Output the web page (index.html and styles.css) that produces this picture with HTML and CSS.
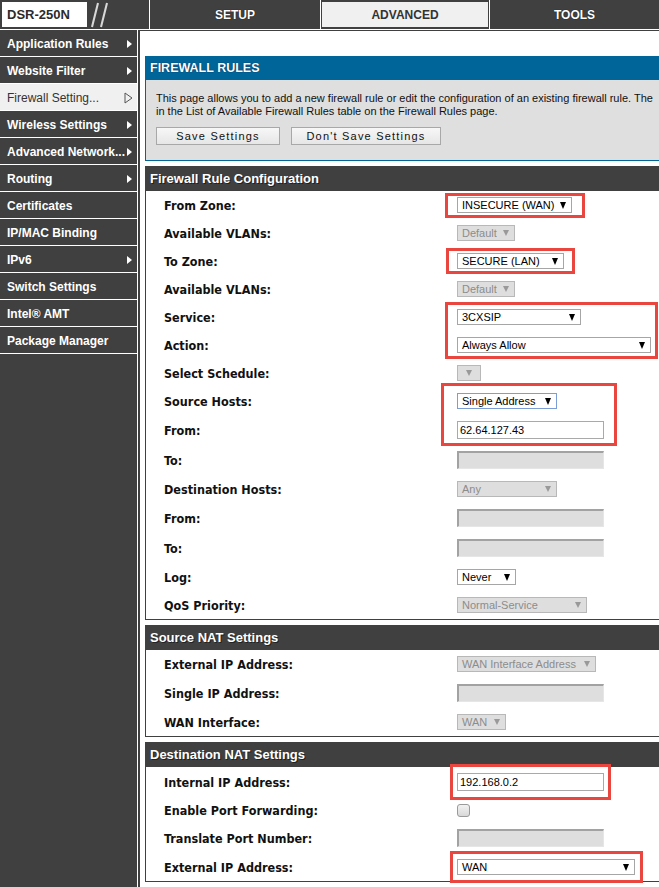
FILE: index.html
```html
<!DOCTYPE html>
<html>
<head>
<meta charset="utf-8">
<title>DSR-250N Firewall Rules</title>
<link rel="stylesheet" href="styles.css">
</head>
<body>
<header class="top">
  <div class="brand">
    <span class="model">DSR-250N</span>
    <svg class="slashes" width="22" height="29" viewBox="0 0 22 29"><line x1="11" y1="3" x2="5" y2="27"/><line x1="20" y1="3" x2="14" y2="27"/></svg>
  </div>
  <div class="tab tab-setup">SETUP</div>
  <div class="tab tab-adv"><span class="tab-box">ADVANCED</span></div>
  <div class="tab tab-tools">TOOLS</div>
</header>
<div class="main">
  <nav class="side">
    <ul class="menu">
      <li><span>Application Rules</span><i class="tri"></i></li>
      <li><span>Website Filter</span><i class="tri"></i></li>
      <li class="cur"><span>Firewall Setting...</span><svg class="tri-o" width="9" height="12" viewBox="0 0 9 12"><polygon points="1,1 8,6 1,11"/></svg></li>
      <li><span>Wireless Settings</span><i class="tri"></i></li>
      <li><span>Advanced Network...</span><i class="tri"></i></li>
      <li><span>Routing</span><i class="tri"></i></li>
      <li><span>Certificates</span></li>
      <li><span>IP/MAC Binding</span></li>
      <li><span>IPv6</span><i class="tri"></i></li>
      <li><span>Switch Settings</span></li>
      <li><span>Intel® AMT</span></li>
      <li><span>Package Manager</span></li>
    </ul>
  </nav>
  <section class="content">
    <div class="panel">
      <div class="blue-head">FIREWALL RULES</div>
      <div class="info">
        <p class="desc">This page allows you to add a new firewall rule or edit the configuration of an existing firewall rule. The<br>in the List of Available Firewall Rules table on the Firewall Rules page.</p>
        <div class="btns">
          <button class="btn btn-save">Save Settings</button>
          <button class="btn btn-nosave">Don't Save Settings</button>
        </div>
      </div>
    </div>

    <div class="panel sec">
      <div class="sec-head">Firewall Rule Configuration</div>
      <div class="sec-body">
        <div class="row"><label>From Zone:</label><span class="sel w115">INSECURE (WAN)<i class="dn"></i></span></div>
        <div class="row"><label>Available VLANs:</label><span class="sel dis w58">Default<i class="dn"></i></span></div>
        <div class="row"><label>To Zone:</label><span class="sel w107">SECURE (LAN)<i class="dn"></i></span></div>
        <div class="row"><label>Available VLANs:</label><span class="sel dis w58">Default<i class="dn"></i></span></div>
        <div class="row"><label>Service:</label><span class="sel w124">3CXSIP<i class="dn"></i></span></div>
        <div class="row"><label>Action:</label><span class="sel w194">Always Allow<i class="dn"></i></span></div>
        <div class="row"><label>Select Schedule:</label><span class="sel dis w24 only-arrow"><i class="dn"></i></span></div>
        <div class="row"><label>Source Hosts:</label><span class="sel focus w100">Single Address<i class="dn"></i></span></div>
        <div class="row tall"><label>From:</label><span class="inp">62.64.127.43</span></div>
        <div class="row tall"><label>To:</label><span class="inp dis"></span></div>
        <div class="row"><label>Destination Hosts:</label><span class="sel dis w100">Any<i class="dn"></i></span></div>
        <div class="row tall"><label>From:</label><span class="inp dis"></span></div>
        <div class="row tall"><label>To:</label><span class="inp dis"></span></div>
        <div class="row"><label>Log:</label><span class="sel w59">Never<i class="dn"></i></span></div>
        <div class="row"><label>QoS Priority:</label><span class="sel dis w130">Normal-Service<i class="dn"></i></span></div>
      </div>
    </div>

    <div class="panel sec">
      <div class="sec-head">Source NAT Settings</div>
      <div class="sec-body">
        <div class="row"><label>External IP Address:</label><span class="sel dis w139">WAN Interface Address<i class="dn"></i></span></div>
        <div class="row tall"><label>Single IP Address:</label><span class="inp dis"></span></div>
        <div class="row"><label>WAN Interface:</label><span class="sel dis w49">WAN<i class="dn"></i></span></div>
      </div>
    </div>

    <div class="panel sec">
      <div class="sec-head">Destination NAT Settings</div>
      <div class="sec-body">
        <div class="row tall"><label>Internal IP Address:</label><span class="inp">192.168.0.2</span></div>
        <div class="row short"><label>Enable Port Forwarding:</label><span class="chk"></span></div>
        <div class="row tall"><label>Translate Port Number:</label><span class="inp dis"></span></div>
        <div class="row"><label>External IP Address:</label><span class="sel w178">WAN<i class="dn"></i></span></div>
      </div>
    </div>

    <div class="mark mark-from"></div>
    <div class="mark mark-to"></div>
    <div class="mark mark-service"></div>
    <div class="mark mark-source"></div>
    <div class="mark mark-internal"></div>
    <div class="mark mark-external"></div>
  </section>
</div>
</body>
</html>
```
FILE: styles.css
```css
* { box-sizing: border-box; }
html, body { margin: 0; padding: 0; }
body {
  width: 659px;
  height: 887px;
  overflow: hidden;
  background: #fff;
  font-family: "Liberation Sans", Arial, sans-serif;
  color: #000;
}

/* ---------- top bar ---------- */
.top {
  display: flex;
  height: 30px;
  background: #404040;
  border-bottom: 1px solid #fff;
}
.brand {
  width: 149px;
  display: flex;
  align-items: stretch;
  padding: 2px 0 2px 2px;
}
.model {
  width: 85px;
  background: #fff;
  color: #2b2b2b;
  font-weight: bold;
  font-size: 13px;
  line-height: 25px;
  padding-left: 5px;
}
.slashes { display: block; margin-top: -2px; }
.slashes line { stroke: #d8d8d8; stroke-width: 2; }
.tab {
  border-left: 1px solid #fff;
  display: flex;
  align-items: center;
  justify-content: center;
  color: #fff;
  font-weight: bold;
  font-size: 12px;
  text-shadow: 0 0 1px #000;
}
.tab-setup { width: 171px; }
.tab-adv { width: 169px; padding: 2px 1px; align-items: stretch; }
.tab-tools { flex: 1; }
.tab-box {
  flex: 1;
  background: #f0f0f0;
  color: #333;
  text-shadow: none;
  display: flex;
  align-items: center;
  justify-content: center;
}

/* ---------- layout ---------- */
.main { display: flex; height: 857px; }
.side { width: 140px; background: #404040; flex: none; }
.menu {
  list-style: none;
  margin: 0;
  padding: 0;
  width: 138px;
  height: 100%;
  border-right: 1px solid #fff;
}
.menu li {
  height: 27px;
  border-bottom: 1px solid #fff;
  display: flex;
  align-items: center;
  justify-content: space-between;
  padding: 1px 5px 0 7px;
  color: #fff;
  font-weight: bold;
  font-size: 12px;
}
.menu li.cur {
  background: #f0f0f0;
  color: #333;
  font-weight: normal;
  padding-right: 4px;
}
.tri {
  width: 0;
  height: 0;
  border-left: 5px solid #fff;
  border-top: 4.5px solid transparent;
  border-bottom: 4.5px solid transparent;
}
.tri-o polygon { fill: none; stroke: #555; stroke-width: 1; }

.content {
  flex: 1;
  position: relative;
  overflow: hidden;
  border-top: 1px solid #404040;
  padding: 25px 0 0 5px;
}
.panel { width: 560px; }

/* ---------- firewall rules box ---------- */
.blue-head {
  height: 24px;
  line-height: 25px;
  background: #006699;
  color: #fff;
  font-weight: bold;
  font-size: 12.5px;
  padding-left: 5px;
  text-shadow: 0 0 1px #003;
}
.info {
  background: #dfdfdf;
  border: 1px solid #006699;
  border-top: none;
  padding: 12px 0 15px 10px;
}
.desc {
  margin: 0;
  font-size: 11px;
  line-height: 13px;
  white-space: nowrap;
  color: #111;
}
.btns { display: flex; gap: 11px; margin-top: 9px; }
.btn {
  height: 18px;
  padding: 0;
  border: 1px solid #a8a8a8;
  background: linear-gradient(#f7f7f7, #e6e6e6);
  font-family: "Liberation Sans", Arial, sans-serif;
  font-size: 11px;
  letter-spacing: 1.2px;
  color: #111;
}
.btn-save { width: 124px; }
.btn-nosave { width: 150px; }

/* ---------- config sections ---------- */
.sec { margin-top: 5px; }
.sec-head {
  height: 25px;
  line-height: 25px;
  background: #404040;
  color: #fff;
  font-weight: bold;
  font-size: 13px;
  padding-left: 5px;
  text-shadow: 1px 1px 0 #222;
}
.sec-body {
  border-left: 1px solid #404040;
  border-bottom: 1px solid #404040;
}
.row {
  display: flex;
  align-items: center;
  height: 28px;
}
.row.tall { height: 30px; }
.row.short { height: 26px; }
.row label {
  width: 311px;
  flex: none;
  padding-left: 18px;
  font-family: "DejaVu Sans Condensed", "DejaVu Sans", sans-serif;
  font-stretch: condensed;
  font-weight: bold;
  font-size: 12.5px;
  color: #111;
}

.sel {
  display: inline-flex;
  align-items: center;
  justify-content: space-between;
  height: 16px;
  padding: 0 5px 0 4px;
  border: 1px solid #a6a6a6;
  background: #fff;
  font-size: 11px;
  color: #000;
  white-space: nowrap;
}
.sel.dis { background: #dedede; color: #8c8c8c; border-color: #b8b8b8; }
.sel.focus { border-color: #7b9ed6; }
.sel.only-arrow { justify-content: center; padding: 0; }
.dn {
  width: 0;
  height: 0;
  border-left: 3.5px solid transparent;
  border-right: 3.5px solid transparent;
  border-top: 7px solid #000;
}
.sel.dis .dn { border-top-color: #999; border-top-width: 6px; }
.w24 { width: 24px; }
.w49 { width: 49px; }
.w58 { width: 58px; }
.w59 { width: 59px; }
.w100 { width: 100px; }
.w107 { width: 107px; }
.w115 { width: 115px; }
.w124 { width: 124px; }
.w130 { width: 130px; }
.w139 { width: 139px; }
.w178 { width: 178px; }
.w194 { width: 194px; }

.inp {
  display: inline-flex;
  align-items: center;
  width: 147px;
  height: 18px;
  padding-left: 2px;
  border: 1px solid #a9a9a9;
  background: #fff;
  font-size: 11px;
}
.inp.dis {
  background: #dedede;
  border-top: 2px solid #a2a2a2;
  border-left: 2px solid #a2a2a2;
  border-right: 1px solid #e6e6e6;
  border-bottom: 1px solid #e6e6e6;
}
.chk {
  width: 13px;
  height: 13px;
  border: 1px solid #9a9a9a;
  border-radius: 3px;
  background: linear-gradient(#f2f2f2, #d8d8d8);
}

/* ---------- red annotation boxes (overlay) ---------- */
.mark {
  position: absolute;
  border: 3px solid #e8463f;
}
.mark-from { left: 305px; top: 162px; width: 140px; height: 25px; }
.mark-to { left: 306px; top: 217px; width: 129px; height: 26px; }
.mark-service { left: 305px; top: 271px; width: 213px; height: 57px; }
.mark-source { left: 301px; top: 352px; width: 176px; height: 63px; }
.mark-internal { left: 310px; top: 733px; width: 161px; height: 36px; }
.mark-external { left: 310px; top: 820px; width: 193px; height: 32px; }
```
